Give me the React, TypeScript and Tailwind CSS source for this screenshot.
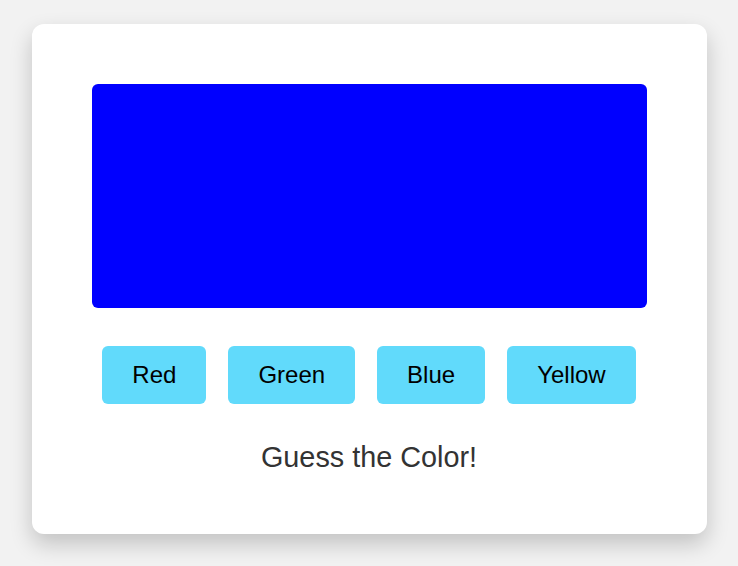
const colors = ["Red", "Green", "Blue", "Yellow"];

export default function App() {
  return (
    <div
      className="min-h-[566px] bg-[#f2f2f2] pt-6"
      style={{ fontFamily: '"Liberation Sans", Arial, sans-serif' }}
    >
      <div className="mx-auto w-[675px] rounded-[12px] bg-white px-[60px] pt-[60px] pb-[60px] shadow-[0_10px_22px_rgba(0,0,0,0.2)]">
        <div className="h-[224px] w-full rounded-[6px] bg-[#0000ff]" />
        <div className="mt-[38px] flex justify-center gap-[22px]">
          {colors.map((c) => (
            <button
              key={c}
              type="button"
              className="rounded-[6px] bg-[#61dafb] px-[30px] py-[15px] text-[24px] leading-[1.15] text-black"
            >
              {c}
            </button>
          ))}
        </div>
        <p className="mt-[37px] text-center text-[28.8px] leading-[1.15] text-[#333]">
          Guess the Color!
        </p>
      </div>
    </div>
  );
}
